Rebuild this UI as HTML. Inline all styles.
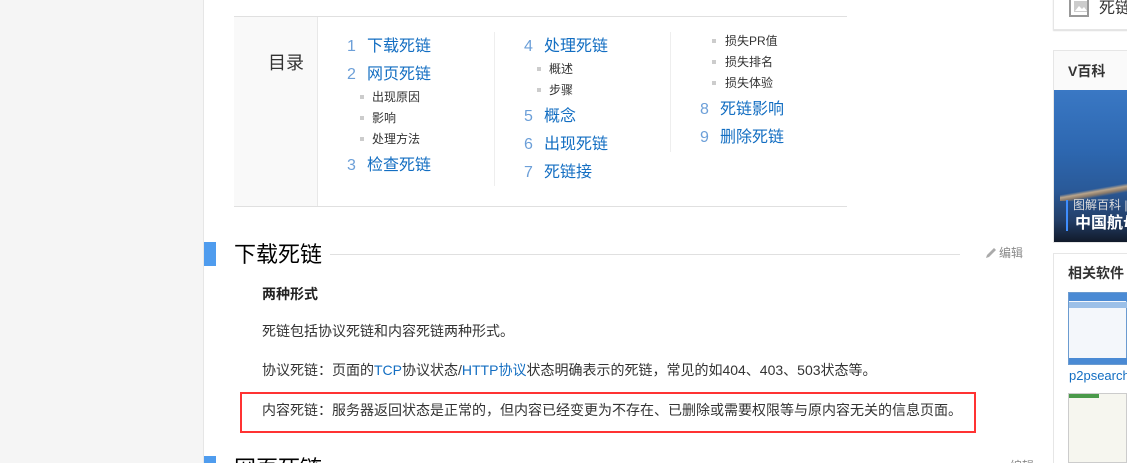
<!DOCTYPE html>
<html><head><meta charset="utf-8"><style>
*{margin:0;padding:0;box-sizing:border-box}
html,body{width:1127px;height:463px;overflow:hidden}
body{background:#fff;position:relative;font-family:"Liberation Sans","Noto Sans CJK SC",sans-serif;color:#333}
.a{position:absolute;white-space:nowrap;line-height:20px}
.l{color:#136ec2;font-size:16px}
.n{color:#6c9fd8;font-size:16px}
.s{font-size:12px;color:#333;line-height:16px}
.b{width:4px;height:4px;background:#ccc}
p.a{font-size:14px;line-height:20px}
</style></head><body>
<div class="a" style="left:0;top:0;width:204px;height:463px;background:#f5f5f5;border-right:1px solid #e6e6e6"></div>
<!-- TOC -->
<div class="a" style="left:234px;top:16px;width:613px;height:191px;border-top:1px solid #e0e0e0;border-bottom:1px solid #e0e0e0"></div>
<div class="a" style="left:234px;top:17px;width:84px;height:189px;background:#f9f9f9;border-right:1px solid #e8e8e8"></div>
<div class="a" style="left:268px;top:51px;font-size:18px;line-height:24px;color:#333">目录</div>
<div class="a" style="left:494px;top:32px;width:1px;height:154px;background:#eee"></div>
<div class="a" style="left:670px;top:32px;width:1px;height:120px;background:#eee"></div>

<div class="a n" style="left:347px;top:37px">1</div><div class="a l" style="left:367px;top:37px">下载死链</div>
<div class="a n" style="left:347px;top:65px">2</div><div class="a l" style="left:367px;top:65px">网页死链</div>
<div class="a b" style="left:360px;top:95px"></div><div class="a s" style="left:372px;top:89px">出现原因</div>
<div class="a b" style="left:360px;top:116px"></div><div class="a s" style="left:372px;top:110px">影响</div>
<div class="a b" style="left:360px;top:137px"></div><div class="a s" style="left:372px;top:131px">处理方法</div>
<div class="a n" style="left:347px;top:156px">3</div><div class="a l" style="left:367px;top:156px">检查死链</div>

<div class="a n" style="left:524px;top:37px">4</div><div class="a l" style="left:544px;top:37px">处理死链</div>
<div class="a b" style="left:537px;top:67px"></div><div class="a s" style="left:549px;top:61px">概述</div>
<div class="a b" style="left:537px;top:88px"></div><div class="a s" style="left:549px;top:82px">步骤</div>
<div class="a n" style="left:524px;top:107px">5</div><div class="a l" style="left:544px;top:107px">概念</div>
<div class="a n" style="left:524px;top:135px">6</div><div class="a l" style="left:544px;top:135px">出现死链</div>
<div class="a n" style="left:524px;top:163px">7</div><div class="a l" style="left:544px;top:163px">死链接</div>

<div class="a b" style="left:712px;top:39px"></div><div class="a s" style="left:725px;top:33px">损失PR值</div>
<div class="a b" style="left:712px;top:60px"></div><div class="a s" style="left:725px;top:54px">损失排名</div>
<div class="a b" style="left:712px;top:81px"></div><div class="a s" style="left:725px;top:75px">损失体验</div>
<div class="a n" style="left:700px;top:100px">8</div><div class="a l" style="left:720px;top:100px">死链影响</div>
<div class="a n" style="left:700px;top:128px">9</div><div class="a l" style="left:720px;top:128px">删除死链</div>

<!-- heading -->
<div class="a" style="left:204px;top:242px;width:12px;height:24px;background:#4f9cee"></div>
<div class="a" style="left:234px;top:240px;font-size:22px;line-height:30px;color:#000">下载死链</div>
<div class="a" style="left:330px;top:254px;width:630px;height:1px;background:#e0e0e0"></div>
<svg class="a" style="left:984px;top:247px" width="14" height="13" viewBox="0 0 14 13"><path d="M2 11 L3 8 L10 1 L12 3 L5 10 Z" fill="#aaa"/></svg>
<div class="a" style="left:999px;top:243px;font-size:12px;color:#888">编辑</div>

<p class="a" style="left:262px;top:284px;font-weight:bold;color:#222">两种形式</p>
<p class="a" style="left:262px;top:321px">死链包括协议死链和内容死链两种形式。</p>
<p class="a" style="left:262px;top:360px">协议死链：页面的<span style="color:#136ec2">TCP</span>协议状态/<span style="color:#136ec2">HTTP协议</span>状态明确表示的死链，常见的如404、403、503状态等。</p>
<p class="a" style="left:262px;top:400px">内容死链：服务器返回状态是正常的，但内容已经变更为不存在、已删除或需要权限等与原内容无关的信息页面。</p>
<div class="a" style="left:240px;top:392px;width:736px;height:41px;border:2px solid #f33"></div>

<div class="a" style="left:204px;top:456px;width:12px;height:10px;background:#4f9cee"></div>
<div class="a" style="left:234px;top:454px;font-size:22px;line-height:30px;color:#000">网页死链</div>
<div class="a" style="left:1010px;top:456px;font-size:12px;color:#888">编辑</div>

<!-- sidebar -->
<div class="a" style="left:1053px;top:-2px;width:80px;height:32px;border:1px solid #e6e6e6;box-shadow:0 1px 1px #ddd"></div>
<svg class="a" style="left:1069px;top:0" width="22" height="20" viewBox="0 0 22 20"><rect x="1" y="-2" width="18" height="18" fill="none" stroke="#999" stroke-width="2"/><rect x="5" y="1" width="13" height="11" fill="#ccc"/><path d="M6 11 L10 6 L13 9 L15 7 L18 11Z" fill="#fff"/></svg>
<div class="a" style="left:1099px;top:-1px;font-size:16px;color:#333">死链</div>

<div class="a" style="left:1053px;top:50px;width:80px;height:193px;border:1px solid #e6e6e6;background:#fafafa"></div>
<div class="a" style="left:1068px;top:61px;font-size:14px;font-weight:bold;color:#333">V百科</div>
<div class="a" style="left:1054px;top:90px;width:73px;height:152px;background:linear-gradient(180deg,#3a78c4 0%,#2d67b0 40%,#2a5a99 65%,#24406a 85%,#111a2a 100%)"></div>
<div class="a" style="left:1060px;top:183px;width:67px;height:18px;background:linear-gradient(170deg,transparent 40%,#b9a58c 50%,#8a7a6a 60%,transparent 70%)"></div>
<div class="a" style="left:1066px;top:200px;width:2px;height:31px;background:#3f8eff"></div>
<div class="a" style="left:1073px;top:195px;font-size:12px;color:#ddd">图解百科 |</div>
<div class="a" style="left:1075px;top:214px;font-size:16px;font-weight:bold;color:#fff">中国航母</div>

<div class="a" style="left:1053px;top:253px;width:80px;height:215px;border:1px solid #e6e6e6"></div>
<div class="a" style="left:1068px;top:263px;font-size:14px;font-weight:bold;color:#333">相关软件</div>
<div class="a" style="left:1068px;top:292px;width:59px;height:73px;background:#f4f7fb;border:1px solid #6b9bd0"></div>
<div class="a" style="left:1069px;top:293px;width:58px;height:8px;background:#4a8ad4"></div>
<div class="a" style="left:1069px;top:302px;width:58px;height:6px;background:#9cc0e8"></div>
<div class="a" style="left:1069px;top:358px;width:58px;height:6px;background:#4a8ad4"></div>
<div class="a" style="left:1069px;top:366px;font-size:13px;color:#136ec2">p2psearch</div>
<div class="a" style="left:1068px;top:393px;width:59px;height:70px;background:#f6f6ef;border:1px solid #ccc"></div>
<div class="a" style="left:1069px;top:394px;width:30px;height:4px;background:#4a9a4a"></div>
</body></html>
